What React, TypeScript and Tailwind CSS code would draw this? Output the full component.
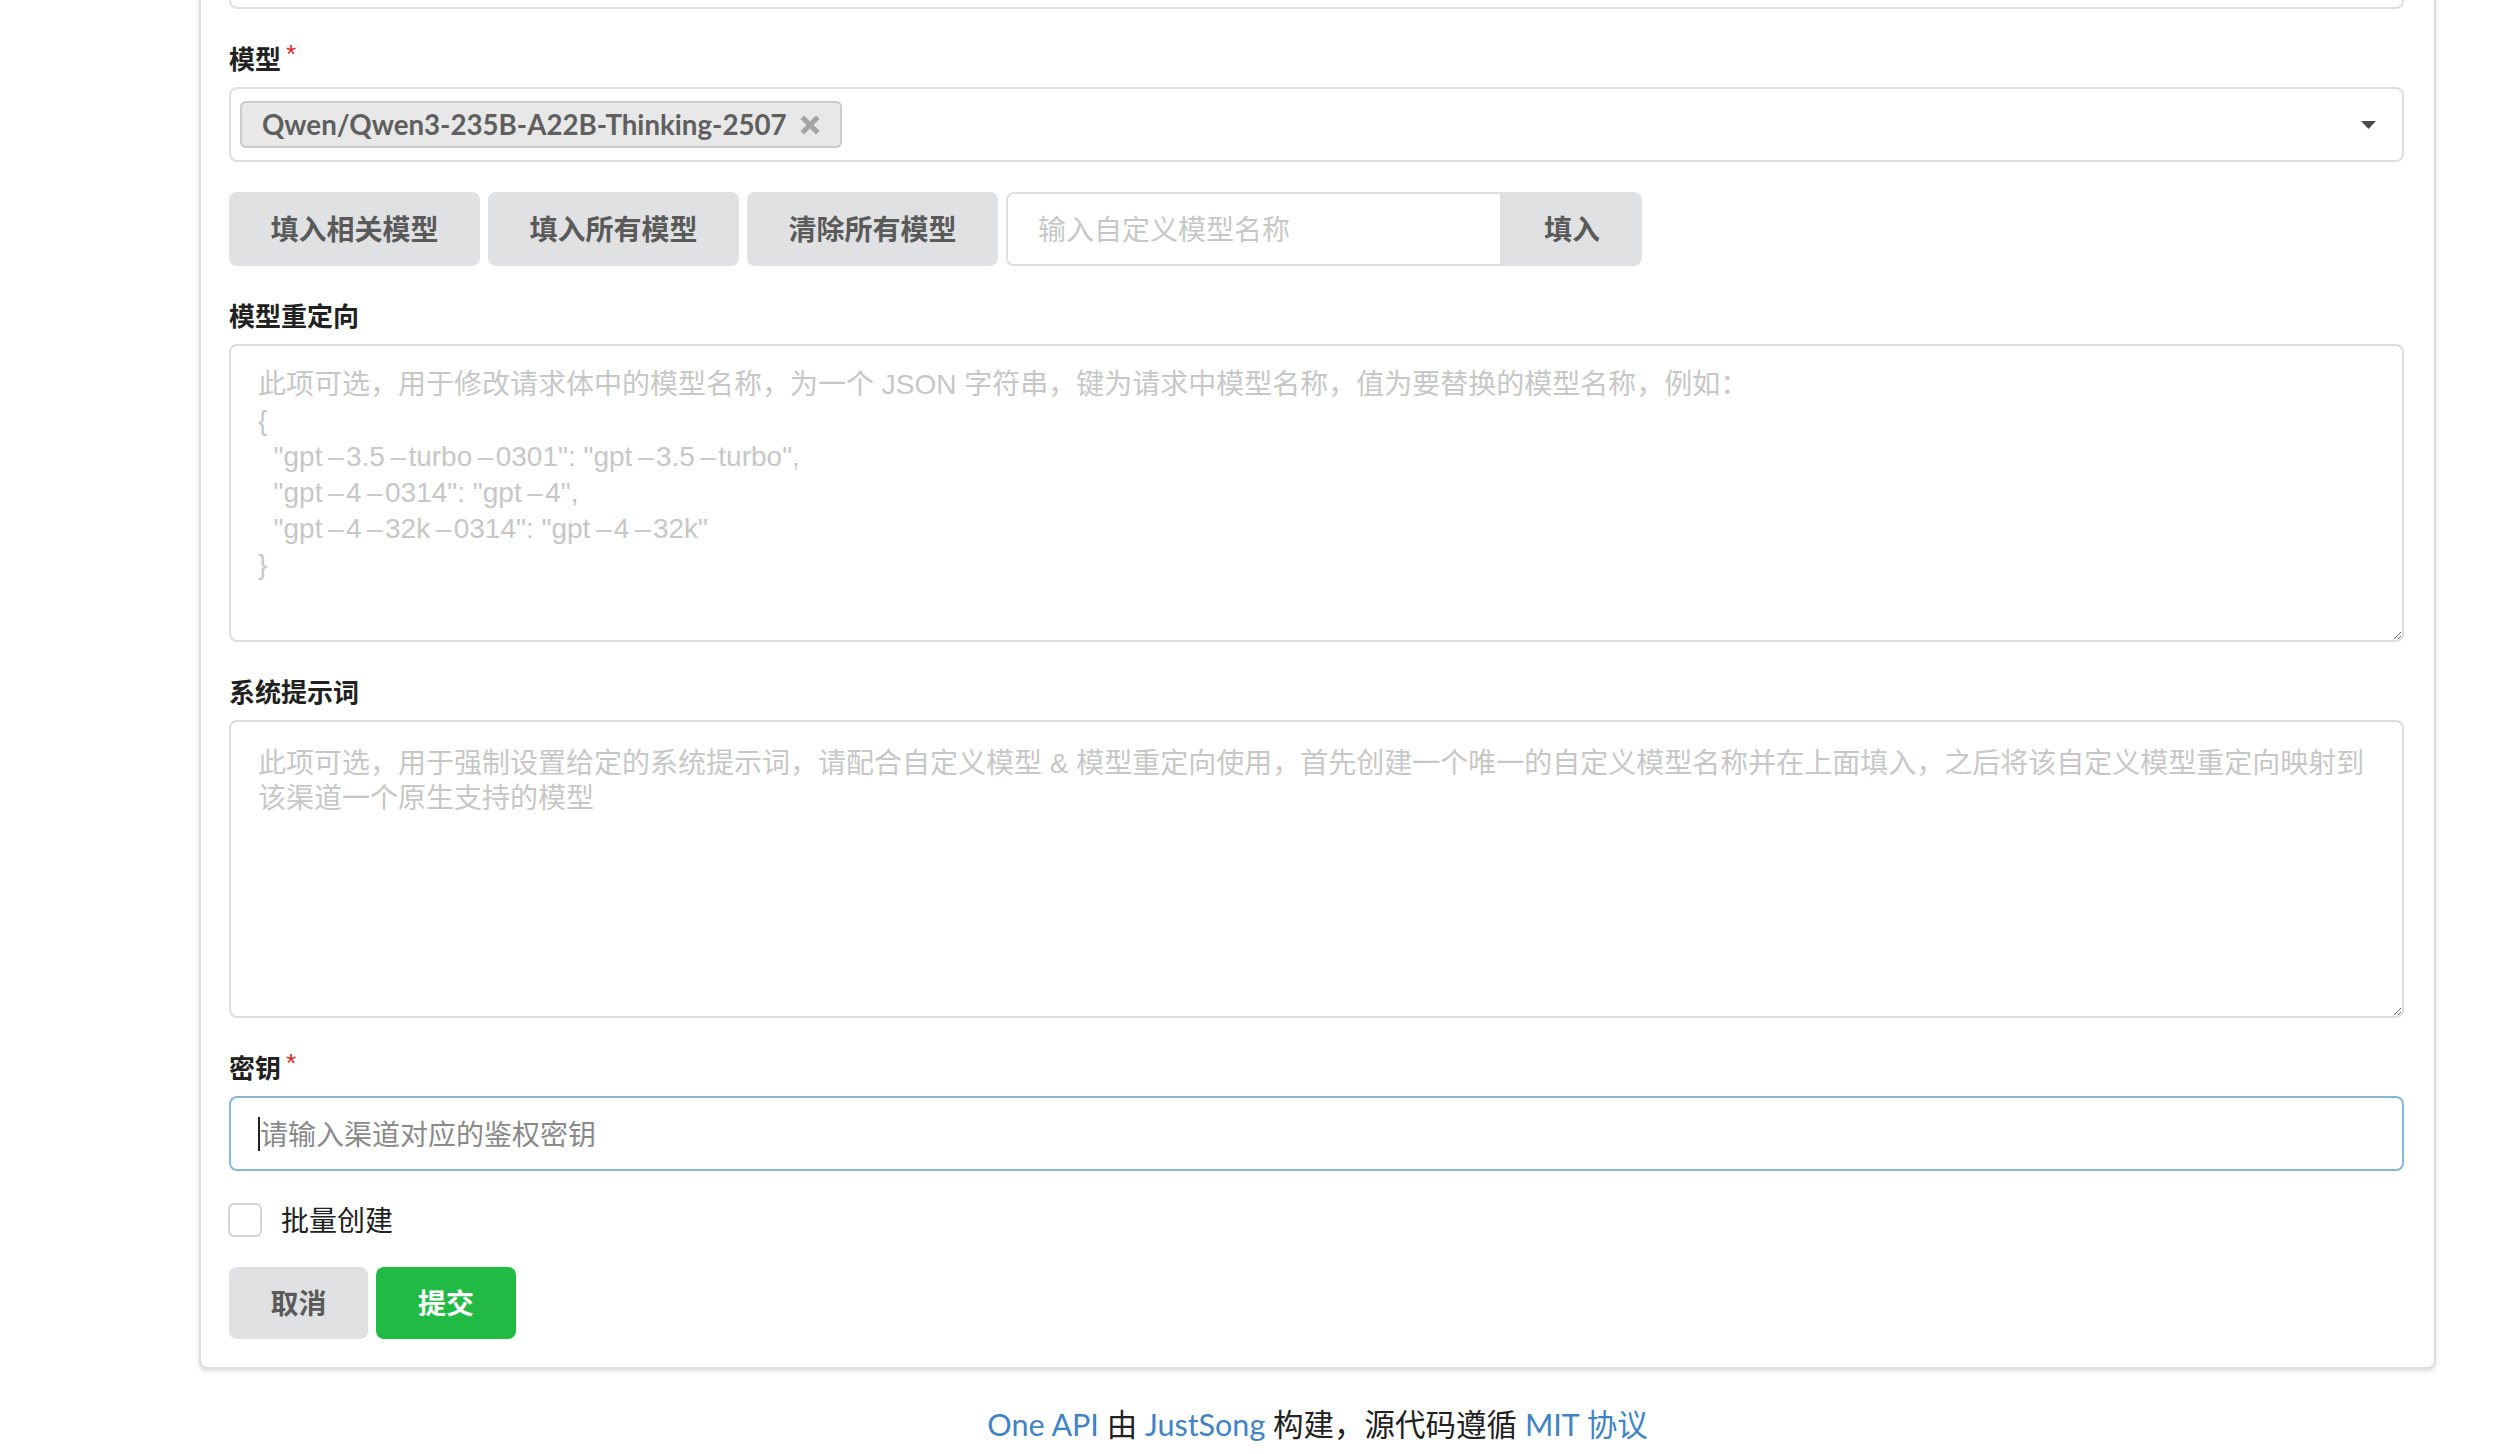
import React from "react";

function FieldLabel({ children, required }: { children: React.ReactNode; required?: boolean }) {
  return (
    <div className="mt-[30px] mb-[8px] h-[40px] flex items-center text-[26px] font-bold text-[#212121]">
      <span>{children}</span>
      {required && (
        <span className="self-start mt-[2px] ml-[5px] text-[26px] leading-[26px] text-[#db2828] font-normal font-['Liberation_Sans',sans-serif]">*</span>
      )}
    </div>
  );
}

const D = "\u2009\u2013\u200A";

const MAPPING_PLACEHOLDER =
  "此项可选，用于修改请求体中的模型名称，为一个 JSON 字符串，键为请求中模型名称，值为要替换的模型名称，例如：\n{\n" +
  `  "gpt${D}3.5${D}turbo${D}0301": "gpt${D}3.5${D}turbo",\n` +
  `  "gpt${D}4${D}0314": "gpt${D}4",\n` +
  `  "gpt${D}4${D}32k${D}0314": "gpt${D}4${D}32k"\n` +
  "}";

const SYSTEM_PLACEHOLDER =
  "此项可选，用于强制设置给定的系统提示词，请配合自定义模型 & 模型重定向使用，首先创建一个唯一的自定义模型名称并在上面填入，之后将该自定义模型重定向映射到该渠道一个原生支持的模型";

export default function App() {
  return (
    <div className="min-h-[1454px] bg-white overflow-hidden font-[Lato,'Noto_Sans_CJK_SC',sans-serif]">
      <div className="ml-[199px] w-[2237px] -mt-[100px] border-2 border-[#dedede] rounded-[8px] shadow-[0_2px_4px_0_rgba(34,36,38,0.15)] pt-[32px] pb-[28px] pl-[28px] pr-[30px] bg-white">
        <div className="h-[75px] border-2 border-[#dedede] rounded-[8px]" />

        <FieldLabel required>模型</FieldLabel>
        <div className="h-[75px] border-2 border-[#dedede] rounded-[8px] flex items-center justify-between pl-[9px] pr-[26px]">
          <div className="h-[47px] px-[22px] bg-[#e8e8e8] rounded-[6px] shadow-[inset_0_0_0_2px_rgba(34,36,38,0.15)] flex items-center gap-[13px] text-[27.7px] font-bold text-[#5f5f5f]">
            <span>Qwen/Qwen3-235B-A22B-Thinking-2507</span>
            <svg width="20" height="20" viewBox="0 0 20 20">
              <path d="M4 4 L16 16 M16 4 L4 16" stroke="#a3a3a3" strokeWidth="5" strokeLinecap="square" />
            </svg>
          </div>
          <svg width="15" height="8" viewBox="0 0 15 8">
            <path d="M0 0 L15 0 L7.5 8 Z" fill="#4a4a4a" />
          </svg>
        </div>

        <div className="mt-[30px] h-[74px] flex gap-[8px] text-[28px] font-bold text-[#5a5a5a]">
          <div className="w-[251px] bg-[#e0e1e2] rounded-[8px] flex items-center justify-center">填入相关模型</div>
          <div className="w-[251px] bg-[#e0e1e2] rounded-[8px] flex items-center justify-center">填入所有模型</div>
          <div className="w-[251px] bg-[#e0e1e2] rounded-[8px] flex items-center justify-center">清除所有模型</div>
          <div className="flex">
            <div className="w-[496px] border-2 border-[#dedede] rounded-l-[8px] flex items-center pl-[30px] text-[28px] font-normal text-[#c7c7c7]">
              输入自定义模型名称
            </div>
            <div className="w-[140px] bg-[#e0e1e2] rounded-r-[8px] flex items-center justify-center">填入</div>
          </div>
        </div>

        <FieldLabel>模型重定向</FieldLabel>
        <textarea
          readOnly
          placeholder={MAPPING_PLACEHOLDER}
          className="block w-full h-[298px] border-2 border-[#dedede] rounded-[8px] pl-[27px] pr-[27px] pt-[21px] pb-[20px] text-[28px] leading-[36px] resize-y outline-none placeholder:text-[#c7c7c7] font-['Liberation_Sans','Noto_Sans_CJK_SC',sans-serif]"
        />

        <FieldLabel>系统提示词</FieldLabel>
        <textarea
          readOnly
          placeholder={SYSTEM_PLACEHOLDER}
          className="block w-full h-[298px] border-2 border-[#dedede] rounded-[8px] pl-[27px] pr-[27px] pt-[24px] pb-[20px] text-[28px] leading-[35px] resize-y outline-none placeholder:text-[#c7c7c7] font-['Liberation_Sans','Noto_Sans_CJK_SC',sans-serif]"
        />

        <FieldLabel required>密钥</FieldLabel>
        <div className="h-[75px] border-2 border-[#85b7d9] rounded-[8px] flex items-center pl-[27px] text-[28px] text-[#8a8a8a]">
          <span className="w-[2px] h-[34px] bg-[#222]" />
          <span>请输入渠道对应的鉴权密钥</span>
        </div>

        <div className="mt-[32px] h-[34px] flex items-center gap-[19px]">
          <div className="w-[34px] h-[34px] border-2 border-[#d4d4d5] rounded-[6px] -ml-[1px]" />
          <span className="text-[28px] text-[#212121]">批量创建</span>
        </div>

        <div className="mt-[30px] h-[72px] flex gap-[8px] text-[28px] font-bold">
          <div className="w-[139px] bg-[#e0e1e2] rounded-[8px] flex items-center justify-center text-[#5a5a5a]">取消</div>
          <div className="w-[140px] bg-[#21ba45] rounded-[8px] flex items-center justify-center text-white">提交</div>
        </div>
      </div>

      <div className="ml-[199px] w-[2237px] mt-[37px] h-[38px] flex items-center justify-center text-[30.5px] text-[#212121]">
        <span className="text-[#4183c4]">One API</span>
        <span>&nbsp;由&nbsp;</span>
        <span className="text-[#4183c4]">JustSong</span>
        <span>&nbsp;构建，源代码遵循&nbsp;</span>
        <span className="text-[#4183c4]">MIT 协议</span>
      </div>
    </div>
  );
}
